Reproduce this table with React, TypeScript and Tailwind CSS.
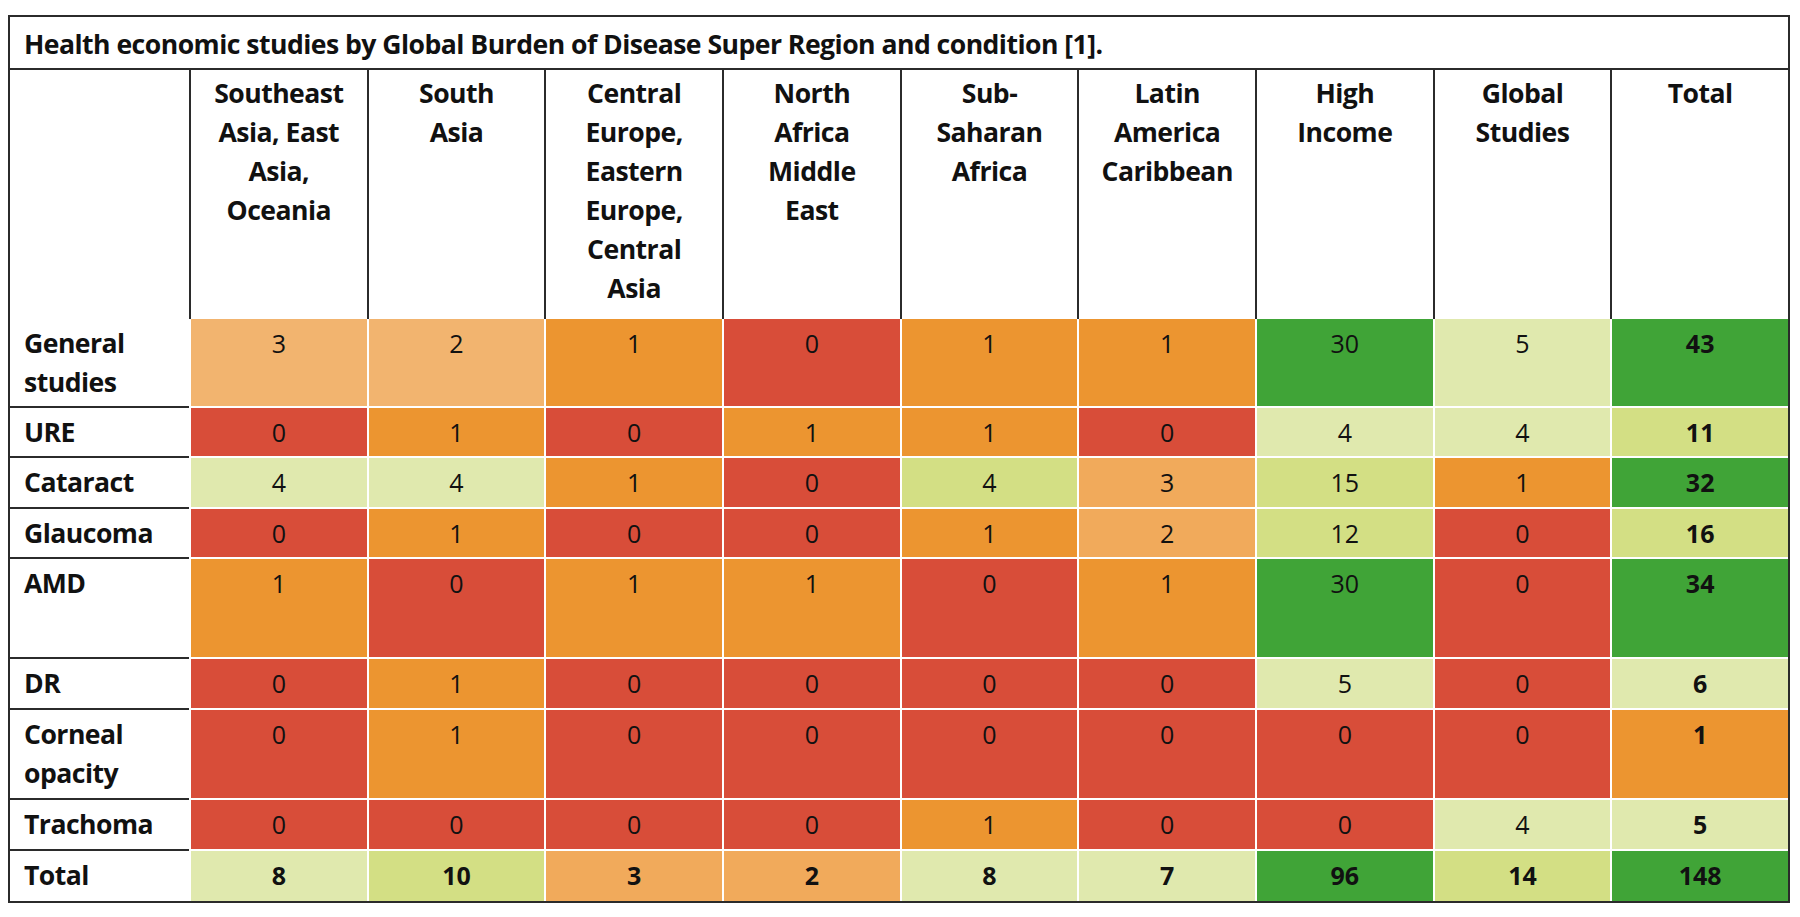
import React from "react";

type Tone = "R" | "O" | "A" | "B" | "L" | "Y" | "G";

const toneBg: Record<Tone, string> = {
  R: "bg-[#d84d39]",
  O: "bg-[#ec9530]",
  A: "bg-[#f2b46f]",
  B: "bg-[#f1aa5b]",
  L: "bg-[#e0e9ae]",
  Y: "bg-[#d3df84]",
  G: "bg-[#40a437]",
};

const headers: string[][] = [
  ["Southeast", "Asia, East", "Asia,", "Oceania"],
  ["South", "Asia"],
  ["Central", "Europe,", "Eastern", "Europe,", "Central", "Asia"],
  ["North", "Africa", "Middle", "East"],
  ["Sub-", "Saharan", "Africa"],
  ["Latin", "America", "Caribbean"],
  ["High", "Income"],
  ["Global", "Studies"],
  ["Total"],
];

type Row = { label: string[]; h: string; cells: [string, Tone][] };

const rows: Row[] = [
  {
    label: ["General", "studies"], h: "h-[89px]",
    cells: [["3", "A"], ["2", "A"], ["1", "O"], ["0", "R"], ["1", "O"], ["1", "O"], ["30", "G"], ["5", "L"], ["43", "G"]],
  },
  {
    label: ["URE"], h: "h-[50px]",
    cells: [["0", "R"], ["1", "O"], ["0", "R"], ["1", "O"], ["1", "O"], ["0", "R"], ["4", "L"], ["4", "L"], ["11", "Y"]],
  },
  {
    label: ["Cataract"], h: "h-[51px]",
    cells: [["4", "L"], ["4", "L"], ["1", "O"], ["0", "R"], ["4", "Y"], ["3", "B"], ["15", "Y"], ["1", "O"], ["32", "G"]],
  },
  {
    label: ["Glaucoma"], h: "h-[50px]",
    cells: [["0", "R"], ["1", "O"], ["0", "R"], ["0", "R"], ["1", "O"], ["2", "B"], ["12", "Y"], ["0", "R"], ["16", "Y"]],
  },
  {
    label: ["AMD"], h: "h-[100px]",
    cells: [["1", "O"], ["0", "R"], ["1", "O"], ["1", "O"], ["0", "R"], ["1", "O"], ["30", "G"], ["0", "R"], ["34", "G"]],
  },
  {
    label: ["DR"], h: "h-[51px]",
    cells: [["0", "R"], ["1", "O"], ["0", "R"], ["0", "R"], ["0", "R"], ["0", "R"], ["5", "L"], ["0", "R"], ["6", "L"]],
  },
  {
    label: ["Corneal", "opacity"], h: "h-[90px]",
    cells: [["0", "R"], ["1", "O"], ["0", "R"], ["0", "R"], ["0", "R"], ["0", "R"], ["0", "R"], ["0", "R"], ["1", "O"]],
  },
  {
    label: ["Trachoma"], h: "h-[51px]",
    cells: [["0", "R"], ["0", "R"], ["0", "R"], ["0", "R"], ["1", "O"], ["0", "R"], ["0", "R"], ["4", "L"], ["5", "L"]],
  },
  {
    label: ["Total"], h: "h-[50px]",
    cells: [["8", "L"], ["10", "Y"], ["3", "B"], ["2", "B"], ["8", "L"], ["7", "L"], ["96", "G"], ["14", "Y"], ["148", "G"]],
  },
];

export default function App() {
  return (
    <div className="w-[1800px] h-[917px] bg-white pt-[15px] pl-[8px] font-['Open_Sans',sans-serif] text-[#111] text-[25px] leading-[39px]">
      <div className="w-[1782px] border-2 border-[#2b2b2b]">
        {/* Title */}
        <div className="h-[53px] border-b-2 border-[#2b2b2b] pl-[14px] pt-[3px] flex items-center font-bold text-[26.6px] tracking-[-0.02em]">
          Health economic studies by Global Burden of Disease Super Region and condition [1].
        </div>

        {/* Column headers */}
        <div className="grid grid-cols-[179px_repeat(9,1fr)] h-[249px]">
          <div />
          {headers.map((lines, i) => (
            <div key={i} className="border-l-2 border-[#2b2b2b] pt-[4px] text-center font-bold text-[26.6px] tracking-[-0.02em]">
              {lines.map((l, j) => (
                <div key={j}>{l}</div>
              ))}
            </div>
          ))}
        </div>

        {/* Body */}
        {rows.map((r, ri) => {
          const last = ri === rows.length - 1;
          return (
            <div key={ri} className={`grid grid-cols-[179px_repeat(9,1fr)] ${r.h}`}>
              <div className={`pl-[14px] pt-[5px] font-bold text-[26.6px] tracking-[-0.02em] ${last ? "" : "border-b-2 border-[#2b2b2b]"}`}>
                {r.label.map((l, j) => (
                  <div key={j}>{l}</div>
                ))}
              </div>
              {r.cells.map(([v, t], ci) => {
                const bold = last || ci === 8;
                return (
                  <div
                    key={ci}
                    className={`${toneBg[t]} border-l-2 border-white ${last ? "" : "border-b-2"} pt-[5px] text-center ${bold ? "font-bold" : "font-normal"}`}
                  >
                    {v}
                  </div>
                );
              })}
            </div>
          );
        })}
      </div>
    </div>
  );
}
